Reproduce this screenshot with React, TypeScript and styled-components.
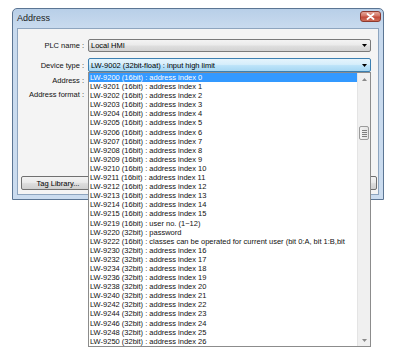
import styled, { createGlobalStyle } from "styled-components";

const GlobalStyle = createGlobalStyle`
  html, body {
    margin: 0;
    padding: 0;
    background: #fff;
    min-height: 100%;
  }
  body {
    font-family: "Liberation Sans", Arial, sans-serif;
    color: #000;
  }
`;

const items: string[] = [
  ...Array.from({ length: 16 }, (_, i) => `LW-${9200 + i} (16bit) : address index ${i}`),
  "LW-9219 (16bit) : user no. (1~12)",
  "LW-9220 (32bit) : password",
  "LW-9222 (16bit) : classes can be operated for current user (bit 0:A, bit 1:B,bit",
  ...Array.from({ length: 11 }, (_, i) => `LW-${9230 + i * 2} (32bit) : address index ${16 + i}`),
];

const Arrow = ({ color = "#000" }: { color?: string }) => (
  <svg width="5" height="3" viewBox="0 0 5 3">
    <path d="M0 0h5L2.5 3z" fill={color} />
  </svg>
);

const App = () => {
  return (
    <Page>
      <GlobalStyle />
      <Window>
        <TitleBar>
          <Title>Address</Title>
          <CloseButton>
            <svg width="9" height="7" viewBox="0 0 9 7">
              <path d="M1.5 1l6 5M7.5 1l-6 5" stroke="#fff" strokeWidth="1.8" strokeLinecap="round" />
            </svg>
          </CloseButton>
        </TitleBar>
        <Client>
          <Fields>
            <Row $mt={0}>
              <Label>PLC name :</Label>
              <Combo $h={13}>
                <span>Local HMI</span>
                <Arrow />
              </Combo>
            </Row>
            <Row $mt={6}>
              <Label>Device type :</Label>
              <ComboWrap>
                <Combo $h={14} $open>
                  <span>LW-9002 (32bit-float) : input high limit</span>
                  <Arrow />
                </Combo>
                <DropList>
                  <Items>
                    {items.map((text, i) => (
                      <Item key={text} $active={i === 0}>
                        {text}
                      </Item>
                    ))}
                  </Items>
                  <ScrollBar>
                    <ScrollArrow>
                      <svg width="5" height="3" viewBox="0 0 5 3">
                        <path d="M0 3h5L2.5 0z" fill="#8a8a8a" />
                      </svg>
                    </ScrollArrow>
                    <Track>
                      <Thumb>
                        <Grip />
                        <Grip />
                        <Grip />
                        <Grip />
                      </Thumb>
                    </Track>
                    <ScrollArrow>
                      <Arrow color="#8a8a8a" />
                    </ScrollArrow>
                  </ScrollBar>
                </DropList>
              </ComboWrap>
            </Row>
            <Row $mt={1}>
              <Label>Address :</Label>
              <Field />
            </Row>
            <Row $mt={0}>
              <Label>Address format :</Label>
              <Field />
            </Row>
          </Fields>
          <Buttons>
            <Button $w={74}>Tag Library...</Button>
            <Button $w={70}>OK</Button>
          </Buttons>
        </Client>
      </Window>
    </Page>
  );
};

const Page = styled.div`
  min-height: 359px;
  box-sizing: border-box;
  padding: 8px 0 0 12px;
`;

const Window = styled.div`
  width: 372px;
  height: 192px;
  box-sizing: border-box;
  border: 1px solid #5b7593;
  border-radius: 5px 5px 0 0;
  background: linear-gradient(#b8cfe8, #c8daee 18px, #cbdcef);
  padding: 0 4px 4px;
  display: flex;
  flex-direction: column;
`;

const TitleBar = styled.div`
  height: 19px;
  display: flex;
  justify-content: space-between;
  align-items: flex-start;
`;

const Title = styled.div`
  font-size: 9px;
  line-height: 10px;
  margin-top: 4px;
  color: #1b1b1b;
`;

const CloseButton = styled.div`
  width: 21px;
  height: 11px;
  margin: 2px -2px 0 0;
  box-sizing: border-box;
  border: 1px solid #8d3a2f;
  border-radius: 3px;
  background: linear-gradient(#e6a699, #d27262 45%, #c2493a 55%, #cf6f5a);
  display: flex;
  align-items: center;
  justify-content: center;
`;

const Client = styled.div`
  flex: 1;
  background: #f4f4f4;
  border: 1px solid #8ea5bf;
  display: flex;
  flex-direction: column;
  justify-content: space-between;
`;

const Fields = styled.div`
  padding: 9px 7px 0 7px;
  display: flex;
  flex-direction: column;
`;

const Row = styled.div<{ $mt: number }>`
  display: grid;
  grid-template-columns: 59px 1fr;
  column-gap: 4px;
  align-items: center;
  min-height: 14px;
  margin-top: ${(p) => p.$mt}px;
`;

const Label = styled.div`
  font-size: 7.5px;
  text-align: right;
  white-space: nowrap;
  color: #111;
`;

const ComboWrap = styled.div`
  position: relative;
`;

const Combo = styled.div<{ $h: number; $open?: boolean }>`
  height: ${(p) => p.$h}px;
  box-sizing: border-box;
  border: 1px solid ${(p) => (p.$open ? "#3c7fb1" : "#7a7a7a")};
  border-radius: 2px;
  background: ${(p) =>
    p.$open
      ? "linear-gradient(#e5f4fc, #d6eefb 45%, #bce3f9 55%, #a6d7f3)"
      : "linear-gradient(#f3f3f3, #ebebeb 45%, #dedede 55%, #d2d2d2)"};
  display: flex;
  align-items: center;
  justify-content: space-between;
  padding: 0 3px 0 2px;
  font-size: 7.5px;
  white-space: nowrap;
`;

const Field = styled.div`
  height: 13px;
`;

const DropList = styled.div`
  position: absolute;
  top: 100%;
  left: 0;
  right: 0;
  height: 275px;
  box-sizing: border-box;
  border: 1px solid #8c8c8c;
  background: #fff;
  display: flex;
  z-index: 2;
`;

const Items = styled.div`
  flex: 1;
  min-width: 0;
  overflow: hidden;
`;

const Item = styled.div<{ $active?: boolean }>`
  height: 9.1px;
  line-height: 9.1px;
  padding-left: 1px;
  font-size: 7.5px;
  white-space: nowrap;
  overflow: hidden;
  color: ${(p) => (p.$active ? "#fff" : "#111")};
  background: ${(p) => (p.$active ? "#3399ff" : "transparent")};
`;

const ScrollBar = styled.div`
  width: 12px;
  background: #f0f0f0;
  border-left: 1px solid #e4e4e4;
  display: flex;
  flex-direction: column;
`;

const ScrollArrow = styled.div`
  height: 12px;
  display: flex;
  align-items: center;
  justify-content: center;
`;

const Track = styled.div`
  flex: 1;
  padding-top: 41px;
`;

const Thumb = styled.div`
  height: 14px;
  margin: 0 1px;
  box-sizing: border-box;
  border: 1px solid #9b9b9b;
  border-radius: 2px;
  background: linear-gradient(90deg, #f3f3f3, #e4e4e4);
  display: flex;
  flex-direction: column;
  align-items: center;
  justify-content: center;
  gap: 1px;
`;

const Grip = styled.div`
  width: 5px;
  height: 1px;
  background: #7d7d7d;
`;

const Buttons = styled.div`
  display: flex;
  justify-content: space-between;
  padding: 0 1px 4px 3px;
`;

const Button = styled.div<{ $w: number }>`
  width: ${(p) => p.$w}px;
  height: 14px;
  box-sizing: border-box;
  border: 1px solid #707070;
  border-radius: 2px;
  background: linear-gradient(#f2f2f2, #ebebeb 45%, #dddddd 55%, #cfcfcf);
  font-size: 7.5px;
  display: flex;
  align-items: center;
  justify-content: center;
  white-space: nowrap;
`;

export default App;
